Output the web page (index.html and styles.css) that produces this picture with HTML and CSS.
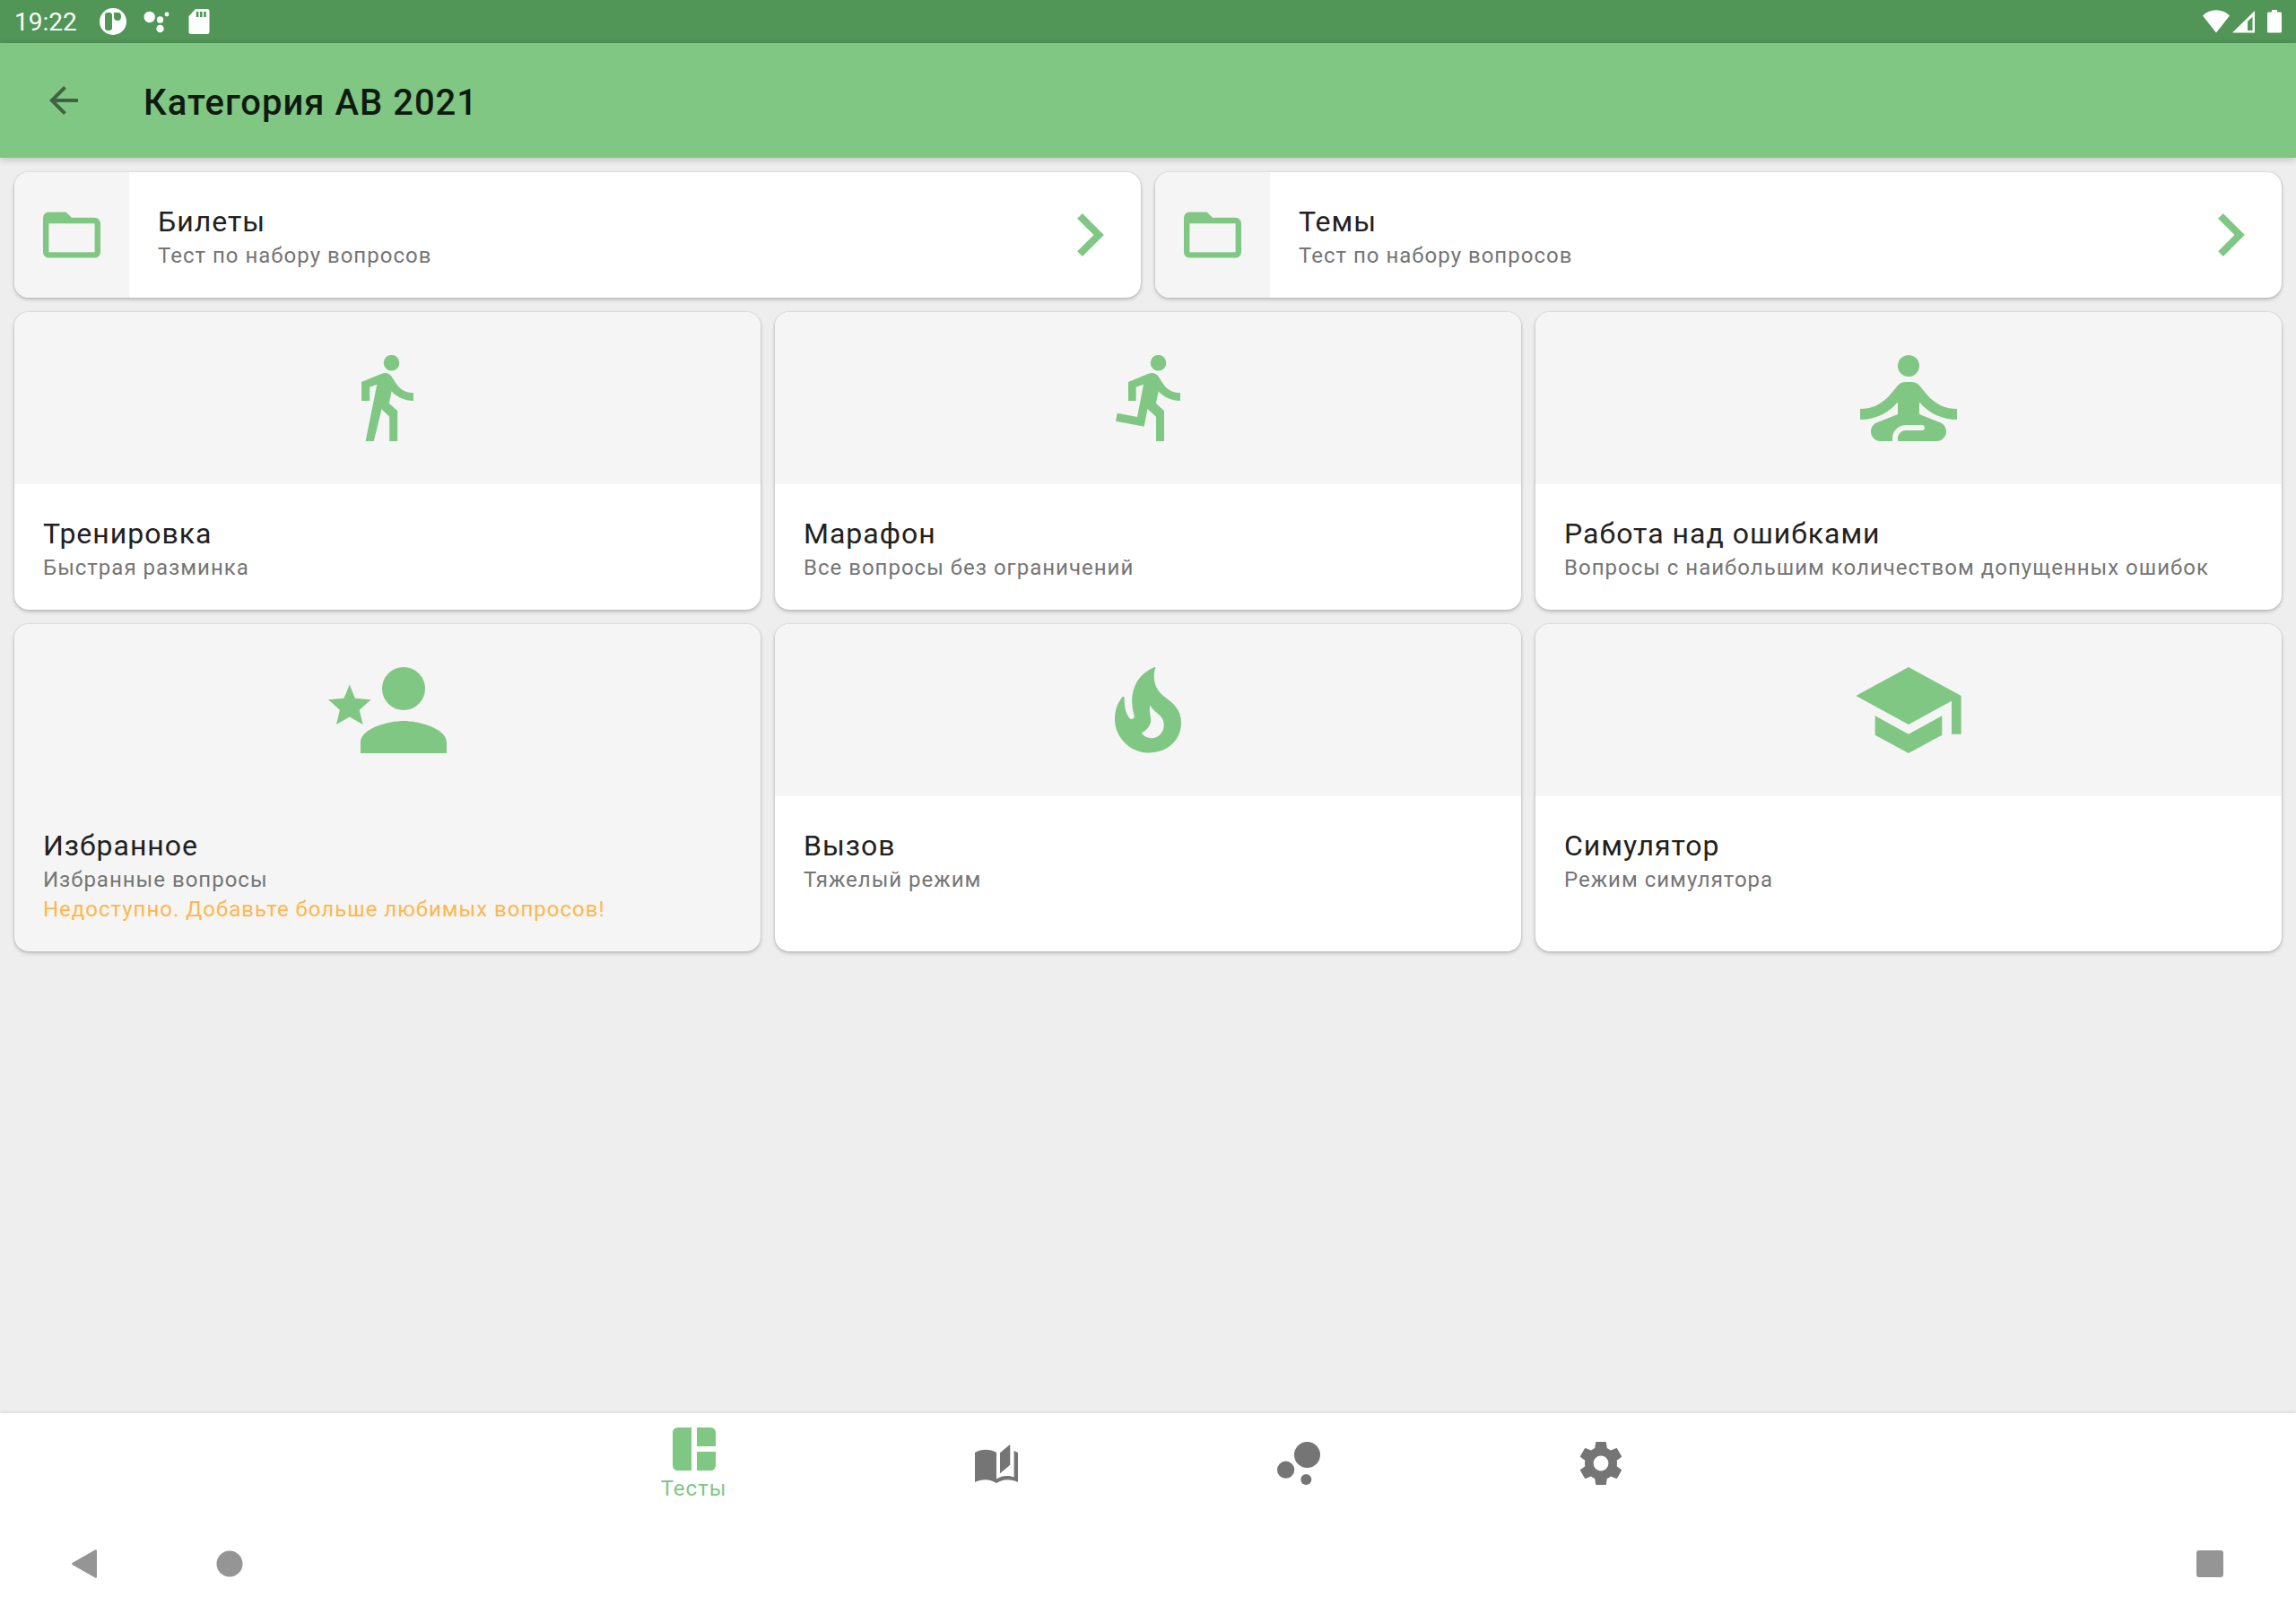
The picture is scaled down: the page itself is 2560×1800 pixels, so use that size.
FILE: index.html
```html
<!DOCTYPE html>
<html lang="ru">
<head>
<meta charset="utf-8">
<meta name="viewport" content="width=device-width, initial-scale=1">
<title>Категория АВ 2021</title>
<link rel="stylesheet" href="styles.css">
</head>
<body>
<div class="status-bar">
  <span class="clock">19:22</span>
  <div class="status-icons">
    <svg width="32" height="32" viewBox="0 0 32 32"><circle cx="16" cy="16" r="15"/><rect class="cut" x="7" y="6" width="8" height="20" rx="3"/><path class="cut" d="M17 6h5q3 0 3 4.500t-4 4.500-4-4.500z"/></svg>
    <svg width="32" height="32" viewBox="0 0 32 32"><circle cx="8.700" cy="11" r="6.200"/><circle cx="20.500" cy="14" r="3.700"/><circle cx="28" cy="8" r="2.400"/><circle cx="20.500" cy="24" r="4.200"/></svg>
    <svg width="32" height="32" viewBox="0 0 32 32"><path d="M12 2h13a2.500 2.500 0 0 1 2.500 2.500v23a2.500 2.500 0 0 1-2.500 2.500H7a2.500 2.500 0 0 1-2.500-2.500V10z"/><path class="cut" d="M12.800 5h2.600v6h-2.600zM17 5h2.600v6H17zM21.200 5h2.600v6h-2.600z"/></svg>
  </div>
  <div class="signal-icons">
    <svg width="30" height="26" viewBox="0 0 30 26"><path d="M0 6.500C8-2 22-2 30 6.500L15 25.500z"/></svg>
    <svg class="cell" width="25" height="26" viewBox="0 0 25 26"><path fill-rule="evenodd" d="M0 25.500L25 1v24.500zM17 23h5.500V7.500L17 13z"/></svg>
    <svg width="16" height="26" viewBox="0 0 16 26"><path d="M5 0h6v2.500h3.500A1.500 1.500 0 0 1 16 4v20a1.500 1.500 0 0 1-1.500 1.500h-13A1.500 1.500 0 0 1 0 24V4a1.500 1.500 0 0 1 1.500-1.500H5z"/></svg>
  </div>
</div>
<header class="app-bar">
  <button class="back" type="button" aria-label="Назад">
    <svg width="32" height="32" viewBox="4 4 16 16"><path d="M20 11H7.830l5.590-5.590L12 4l-8 8 8 8 1.410-1.410L7.830 13H20z"/></svg>
  </button>
  <h1 class="page-title">Категория АВ 2021</h1>
</header>
<main class="content">
  <div class="sets">
    <button class="card set" type="button">
      <span class="set-icon"><svg width="64" height="52" viewBox="2 4 20 16"><path d="M20 18H4V8h16m0-2h-8l-2-2H4a2 2 0 0 0-2 2v12a2 2 0 0 0 2 2h16a2 2 0 0 0 2-2V8a2 2 0 0 0-2-2z"/></svg></span>
      <span class="card-text"><span class="card-title">Билеты</span><span class="card-note">Тест по набору вопросов</span></span>
      <svg class="chevron" width="30" height="48" viewBox="8.590 6 7.410 12"><path d="M8.590 16.590L13.170 12 8.590 7.410 10 6l6 6-6 6z"/></svg>
    </button>
    <button class="card set" type="button">
      <span class="set-icon"><svg width="64" height="52" viewBox="2 4 20 16"><path d="M20 18H4V8h16m0-2h-8l-2-2H4a2 2 0 0 0-2 2v12a2 2 0 0 0 2 2h16a2 2 0 0 0 2-2V8a2 2 0 0 0-2-2z"/></svg></span>
      <span class="card-text"><span class="card-title">Темы</span><span class="card-note">Тест по набору вопросов</span></span>
      <svg class="chevron" width="30" height="48" viewBox="8.590 6 7.410 12"><path d="M8.590 16.590L13.170 12 8.590 7.410 10 6l6 6-6 6z"/></svg>
    </button>
  </div>
  <div class="modes">
    <button class="card mode" type="button">
      <span class="mode-icon"><svg width="58" height="96" viewBox="0 0 58 96"><circle cx="33.500" cy="8.700" r="8.800"/><path d="M0 30L22 21C26.500 19 31 19.800 33.700 24L38.500 31.500C43 38.500 50 42.300 58 42.300V51C48 51 39.500 47 33.600 40.600L30.800 53.700 40.200 62.300V96H31.200V68.800L22.500 60.200 13.800 96H4.600L17.300 32.700 9.200 35.700V51H0z"/></svg></span>
      <span class="card-text"><span class="card-title">Тренировка</span><span class="card-note">Быстрая разминка</span></span>
    </button>
    <button class="card mode" type="button">
      <span class="mode-icon"><svg width="72" height="96" viewBox="0 0 72 96"><circle cx="47.500" cy="8.700" r="8.800"/><path d="M14 30L36 21C40.500 19 45 19.800 47.700 24L52.500 31.500C57 38.500 64 42.300 72 42.300V51C62 51 53.500 47 47.700 40.600L44.900 53.700 54 62.300V96H45V68.700L35.400 60 31.700 79.700 0 73.700 1.700 64.700 24 69 31 32.700 22.700 35.700V51H14z"/></svg></span>
      <span class="card-text"><span class="card-title">Марафон</span><span class="card-note">Все вопросы без ограничений</span></span>
    </button>
    <button class="card mode" type="button">
      <span class="mode-icon"><svg width="108" height="96" viewBox="3 4 18 16"><circle cx="12" cy="6" r="2"/><path d="M21 16v-2c-2.240 0-4.160-.960-5.600-2.680l-1.340-1.600C13.680 9.260 13.120 9 12.530 9h-1.050c-.600 0-1.150.260-1.530.720l-1.340 1.600C7.160 13.040 5.240 14 3 14v2c2.770 0 5.190-1.170 7-3.250V15l-3.880 1.550c-.670.270-1.120.930-1.120 1.660C5 19.200 5.800 20 6.790 20H9v-.500c0-1.380 1.120-2.500 2.500-2.500h3c.280 0 .500.220.500.500s-.220.500-.500.500h-3c-.830 0-1.500.670-1.500 1.500v.500h7.210c.990 0 1.790-.800 1.790-1.790 0-.730-.450-1.390-1.120-1.660L14 15v-2.250c1.810 2.080 4.230 3.250 7 3.250z"/></svg></span>
      <span class="card-text"><span class="card-title">Работа над ошибками</span><span class="card-note">Вопросы с наибольшим количеством допущенных ошибок</span></span>
    </button>
    <button class="card mode" type="button" disabled>
      <span class="mode-icon"><svg width="132" height="96" viewBox="0 0 132 96"><circle cx="84" cy="24" r="24"/><path d="M84 60C68 60 36 68 36 84V96H132V84C132 68 100 60 84 60zM23.800 19.500L29.900 34.700 47.700 36.300 34.700 47.700 38.600 64 23.800 55.500 9 64 12.900 47.700 0 36.300 17.500 34.700z"/></svg></span>
      <span class="card-text"><span class="card-title">Избранное</span><span class="card-note">Избранные вопросы</span><span class="card-note warning">Недоступно. Добавьте больше любимых вопросов!</span></span>
    </button>
    <button class="card mode" type="button">
      <span class="mode-icon"><svg width="74" height="96" viewBox="0 0 74 96"><path fill-rule="evenodd" d="M45.300.500C42 11 43.500 25 56 33.500C66 40.500 74 48 74 62C74 81 59 95.500 38 95.500C15 95.500 0 76 0 58.700C0 48 3 40 8.300 33.400C9.200 32.400 10.800 33 10.700 34.300C10.500 44 12 51 16.200 56.800C18 59.200 22.400 57.600 21.700 54.600C19.600 47 19 41 19.200 35.500C20 19 29 6.500 43.600.200C44.600-.100 45.500-.100 45.300.500zM39.600 42.600C37 49 41.500 57 39.800 62C38 67.500 35 70.500 29.800 73.600C32 77 36.500 79.300 41 79.300C49 79.300 54.700 72.500 54.700 64.600C54.700 58.500 51.500 54.500 47.500 51.500C43.500 48.500 41 46 39.600 42.600z"/></svg></span>
      <span class="card-text"><span class="card-title">Вызов</span><span class="card-note">Тяжелый режим</span></span>
    </button>
    <button class="card mode" type="button">
      <span class="mode-icon"><svg width="118" height="96" viewBox="1 3 22 18"><path d="M5 13.180v4L12 21l7-3.820v-4L12 17l-7-3.820zM12 3L1 9l11 6 9-4.910V17h2V9L12 3z"/></svg></span>
      <span class="card-text"><span class="card-title">Симулятор</span><span class="card-note">Режим симулятора</span></span>
    </button>
  </div>
</main>
<nav class="tabs">
  <button class="tab active" type="button">
    <svg width="48" height="48" viewBox="0 0 48 48"><path d="M21 0v48H5.500A5.500 5.500 0 0 1 0 42.500v-37A5.500 5.500 0 0 1 5.500 0zM27 0h15.500A5.500 5.500 0 0 1 48 5.500V21H27zM27 27h21v15.500a5.500 5.500 0 0 1-5.500 5.500H27z"/></svg>
    <span>Тесты</span>
  </button>
  <button class="tab" type="button" aria-label="Учебник">
    <svg width="48" height="48" viewBox="0 0 48 48"><path d="M0 12C7.500 7.600 16.500 7.600 24 12V41.400C30 37.800 37 37 43.600 39.500V10L48 12V45C40 41 31 41.200 24 46C17 41.200 8 41 0 45zM28 12.300L39.300 2.700V25.700L28 35.300z"/></svg>
  </button>
  <button class="tab" type="button" aria-label="Статистика">
    <svg width="48" height="48" viewBox="0 0 48 48"><circle cx="33.500" cy="14.500" r="14.500"/><circle cx="9.600" cy="31.200" r="9.600"/><circle cx="32.300" cy="42" r="6"/></svg>
  </button>
  <button class="tab" type="button" aria-label="Настройки">
    <svg width="48" height="48" viewBox="0 0 48 48"><path fill-rule="evenodd" d="M18.900 0H29.100Q29.700 0 29.800.600L30.800 7Q33 8 35 9.500L41.200 7.100Q41.800 6.900 42.100 7.500L47 16Q47.300 16.600 46.800 17L41.700 20.800Q42.300 24 41.700 27.200L46.800 31Q47.300 31.400 47 32L42.100 40.500Q41.800 41.100 41.200 40.900L35 38.500Q33 40 30.800 41L29.800 47.400Q29.700 48 29.100 48H18.900Q18.300 48 18.200 47.400L17.200 41Q15 40 13 38.500L6.800 40.900Q6.200 41.100 5.900 40.500L1 32Q.700 31.400 1.200 31L6.300 27.200Q5.700 24 6.300 20.800L1.200 17Q.700 16.600 1 16L5.900 7.500Q6.200 6.900 6.800 7.100L13 9.500Q15 8 17.200 7L18.200.600Q18.300 0 18.900 0zM24 15.600a8.400 8.400 0 1 0 0 16.800a8.400 8.400 0 1 0 0-16.800z"/></svg>
  </button>
</nav>
<div class="system-nav">
  <button class="system-button" type="button" aria-label="Назад"><svg width="32" height="32" viewBox="0 0 32 32"><path d="M1 14.800L26 .400Q28 -.400 28 1.800V30.200Q28 32.400 26 31.600L1 17.200Q-.800 16 1 14.800z"/></svg></button>
  <button class="system-button" type="button" aria-label="Домой"><svg width="32" height="32" viewBox="0 0 32 32"><circle cx="16" cy="16" r="14.500"/></svg></button>
  <button class="system-button recent" type="button" aria-label="Недавние"><svg width="32" height="32" viewBox="0 0 32 32"><rect x="1" y="1" width="30" height="30" rx="3"/></svg></button>
</div>
</body>
</html>
```
FILE: styles.css
```css
* {
  box-sizing: border-box;
}

body {
  margin: 0;
  min-height: 100vh;
  display: flex;
  flex-direction: column;
  background: #eeeeee;
  color: #212121;
  font-family: Roboto, "Noto Sans", sans-serif;
  font-size: 24px;
}

button {
  border: 0;
  padding: 0;
  background: none;
  color: inherit;
  font: inherit;
  text-align: left;
}

svg {
  display: block;
  flex: none;
  fill: currentColor;
}

.status-bar {
  display: flex;
  align-items: center;
  height: 48px;
  padding: 0 16px;
  background: #519657;
  color: #ffffff;
}

.clock {
  font-size: 28px;
  line-height: 32px;
  padding-top: 2px;
}

.status-icons {
  display: flex;
  gap: 16px;
  margin-left: 24px;
}

.cut {
  fill: #519657;
}

.signal-icons {
  display: flex;
  align-items: center;
  margin-left: auto;
}

.cell {
  margin: 0 14px 0 3px;
}

.app-bar {
  display: flex;
  align-items: center;
  height: 128px;
  padding-left: 24px;
  background: #81c784;
  box-shadow: 0 2px 8px rgba(0, 0, 0, 0.2);
}

.back {
  display: flex;
  align-items: center;
  justify-content: center;
  width: 94px;
  height: 96px;
  color: #3f6341;
}

.page-title {
  margin: 0 0 0 42px;
  padding-top: 6px;
  color: #111a11;
  font-size: 40px;
  line-height: 48px;
  font-weight: 500;
  letter-spacing: 1px;
}

.content {
  flex: 1;
  padding: 16px;
}

.sets,
.modes {
  display: grid;
  gap: 16px;
}

.sets {
  grid-template-columns: repeat(2, 1fr);
  margin-bottom: 16px;
}

.modes {
  grid-template-columns: repeat(3, 1fr);
}

.card {
  display: flex;
  overflow: hidden;
  border-radius: 16px;
  background: #ffffff;
  box-shadow: 0 2px 4px rgba(0, 0, 0, 0.22), 0 0 2px rgba(0, 0, 0, 0.16);
}

.mode {
  flex-direction: column;
}

.card:disabled {
  background: #f5f5f5;
}

.set-icon,
.mode-icon {
  display: flex;
  align-items: center;
  justify-content: center;
  background: #f5f5f5;
  color: #81c784;
}

.set-icon {
  flex: none;
  width: 128px;
  align-self: stretch;
}

.mode-icon {
  width: 100%;
  height: 192px;
}

.card-text {
  display: flex;
  flex: 1;
  flex-direction: column;
  padding: 33px 32px 30px;
}

.card-title {
  color: #212121;
  font-size: 32px;
  line-height: 44px;
  letter-spacing: 1px;
}

.card-note {
  color: #757575;
  font-size: 24px;
  line-height: 33px;
  letter-spacing: 1px;
}

.card-note.warning {
  color: #ffb74d;
}

.chevron {
  align-self: center;
  margin-right: 41px;
  color: #81c784;
}

.tabs {
  display: grid;
  grid-template-columns: repeat(4, 337px);
  justify-content: center;
  height: 112px;
  padding-right: 2px;
  background: #ffffff;
  box-shadow: 0 0 4px rgba(0, 0, 0, 0.14);
}

.tab {
  display: flex;
  flex-direction: column;
  align-items: center;
  justify-content: center;
  gap: 8px;
  line-height: 24px;
  color: #757575;
}

.tab.active {
  color: #81c784;
  letter-spacing: 1px;
}

.system-nav {
  position: relative;
  display: flex;
  gap: 64px;
  height: 112px;
  padding: 0 48px;
  background: #ffffff;
  color: #959595;
}

.system-button {
  display: flex;
  align-items: center;
  justify-content: center;
  width: 96px;
}

.recent {
  margin-left: auto;
}
```
